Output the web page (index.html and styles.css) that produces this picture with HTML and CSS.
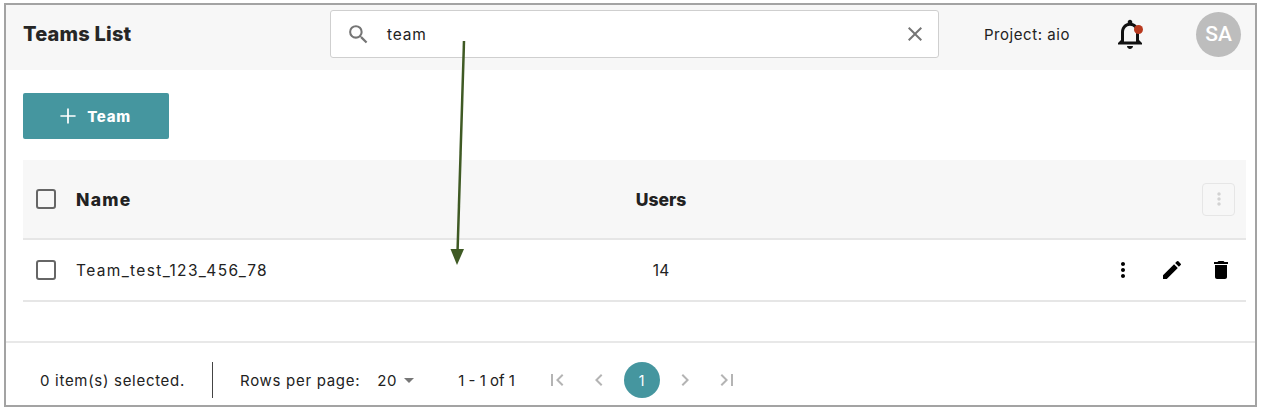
FILE: index.html
```html
<!DOCTYPE html>
<html lang="en">
<head>
    <meta charset="UTF-8">
    <meta name="viewport" content="width=device-width, initial-scale=1.0">
    <title>Teams List</title>
    <link rel="stylesheet" href="styles.css">
</head>
<body>
    <div class="frame">
        <header class="topbar">
            <h1 class="page-title">Teams List</h1>
            <div class="search">
                <svg class="search-icon" width="25" height="25" viewBox="0 0 24 24"><path fill="#757575" d="M15.5 14h-.79l-.28-.27A6.47 6.47 0 0 0 16 9.5 6.5 6.5 0 1 0 9.5 16c1.61 0 3.09-.59 4.23-1.57l.27.28v.79l5 4.99L20.49 19l-4.99-5zm-6 0C7.01 14 5 11.99 5 9.5S7.01 5 9.5 5 14 7.01 14 9.5 11.99 14 9.5 14z"/></svg>
                <span class="search-text">team</span>
                <svg class="clear-icon" width="24" height="24" viewBox="0 0 24 24"><path fill="#757575" d="M19 6.41 17.59 5 12 10.59 6.41 5 5 6.41 10.59 12 5 17.59 6.41 19 12 13.41 17.59 19 19 17.59 13.41 12z"/></svg>
            </div>
            <span class="project">Project: aio</span>
            <span class="bell">
                <svg width="36" height="36" viewBox="0 0 24 24"><path fill="#111" d="M12 22c1.1 0 2-.9 2-2h-4c0 1.100.9 2 2 2zm6-6v-5c0-3.070-1.630-5.640-4.500-6.320V4c0-.83-.67-1.500-1.500-1.500s-1.500.67-1.500 1.500v.68C7.640 5.360 6 7.920 6 11v5l-2 2v1h16v-1l-2-2zm-2 1H8v-6c0-2.480 1.510-4.500 4-4.500s4 2.020 4 4.500v6z"/></svg>
                <span class="bell-dot"></span>
            </span>
            <span class="avatar">SA</span>
        </header>

        <main class="content">
            <button class="btn-add">
                <svg width="26" height="26" viewBox="0 0 24 24"><path fill="#fff" d="M19 12.800h-6.200V19h-1.600v-6.200H5v-1.600h6.200V5h1.600v6.200H19z"/></svg>
                Team
            </button>

            <div class="table-row table-head">
                <span class="check"></span>
                <span class="cell-name">Name</span>
                <span class="cell-users">Users</span>
                <span class="cell-actions">
                    <span class="column-btn">
                        <svg width="20" height="20" viewBox="0 0 24 24"><path fill="#d2d2d2" d="M12 8c1.100 0 2-.9 2-2s-.9-2-2-2-2 .9-2 2 .9 2 2 2zm0 2c-1.100 0-2 .9-2 2s.9 2 2 2 2-.9 2-2-.9-2-2-2zm0 6c-1.100 0-2 .9-2 2s.9 2 2 2 2-.9 2-2-.9-2-2-2z"/></svg>
                    </span>
                </span>
            </div>

            <div class="table-row table-body">
                <span class="check"></span>
                <span class="cell-name">Team_test_123_456_78</span>
                <span class="cell-users">14</span>
                <span class="cell-actions row-actions">
                    <svg width="24" height="24" viewBox="0 0 24 24"><path fill="#000" d="M12 8c1.100 0 2-.9 2-2s-.9-2-2-2-2 .9-2 2 .9 2 2 2zm0 2c-1.100 0-2 .9-2 2s.9 2 2 2 2-.9 2-2-.9-2-2-2zm0 6c-1.100 0-2 .9-2 2s.9 2 2 2 2-.9 2-2-.9-2-2-2z"/></svg>
                    <svg width="24" height="24" viewBox="0 0 24 24"><path fill="#000" d="M3 17.250V21h3.750L17.810 9.940l-3.750-3.750L3 17.250zM20.710 7.040a1 1 0 0 0 0-1.410l-2.340-2.340a1 1 0 0 0-1.410 0l-1.830 1.830 3.750 3.750 1.830-1.830z"/></svg>
                    <svg width="24" height="24" viewBox="0 0 24 24"><path fill="#000" d="M6 19c0 1.100.9 2 2 2h8c1.100 0 2-.9 2-2V7H6v12zM19 4h-3.500l-1-1h-5l-1 1H5v2h14V4z"/></svg>
                </span>
            </div>
        </main>

        <footer class="pager">
            <span class="selected">0 item(s) selected.</span>
            <span class="divider"></span>
            <span class="rows-label">Rows per page:</span>
            <span class="rows-value">20</span>
            <span class="caret"></span>
            <span class="range">1 - 1 of 1</span>
            <span class="page-nav">
                <svg width="24" height="24" viewBox="0 0 24 24"><path fill="#b4b4b4" d="M18.410 16.590 13.820 12l4.590-4.590L17 6l-6 6 6 6zM6 6h2v12H6z"/></svg>
                <svg width="24" height="24" viewBox="0 0 24 24"><path fill="#b4b4b4" d="M15.410 7.410 14 6l-6 6 6 6 1.410-1.410L10.830 12z"/></svg>
                <span class="page-current">1</span>
                <svg width="24" height="24" viewBox="0 0 24 24"><path fill="#b4b4b4" d="M10 6 8.590 7.410 13.170 12l-4.580 4.590L10 18l6-6z"/></svg>
                <svg width="24" height="24" viewBox="0 0 24 24"><path fill="#b4b4b4" d="M5.590 7.410 10.180 12l-4.590 4.590L7 18l6-6-6-6zM16 6h2v12h-2z"/></svg>
            </span>
        </footer>

        <!-- annotation drawn over the screenshot -->
        <svg class="arrow" width="40" height="240" viewBox="0 0 40 240">
            <path fill="none" stroke="#3f5a24" stroke-width="2.500" d="M24 0 17.500 212"/>
            <path fill="#3f5a24" d="M10.500 208H24L17 224z"/>
        </svg>
    </div>
</body>
</html>
```

FILE: styles.css
```css
* {
    box-sizing: border-box;
}
body {
    margin: 0;
    background-color: #fff;
    font-family: Inter, "Open Sans", sans-serif;
    color: #222;
}
.frame {
    position: relative;
    display: flex;
    flex-direction: column;
    width: 1253px;
    height: 404px;
    margin: 3px 0 0 4px;
    border: 2px solid #a3a3a3;
    background: #fff;
}
.topbar {
    display: flex;
    align-items: center;
    height: 65px;
    padding: 0 14px 7px 17px;
    background-color: #f7f7f7;
}
.page-title {
    width: 307px;
    margin: 0;
    font-size: 20px;
    font-weight: 800;
    letter-spacing: .2px;
    color: #262626;
}
.search {
    display: flex;
    align-items: center;
    width: 609px;
    height: 48px;
    padding: 0 11px 0 15px;
    background: #fff;
    border: 1px solid #cfcfcf;
    border-radius: 3px;
}
.search-text {
    flex: 1;
    margin-left: 16px;
    font-size: 15.500px;
    letter-spacing: .8px;
}
.project {
    margin-left: 45px;
    font-size: 15px;
    letter-spacing: .55px;
}
.bell {
    position: relative;
    display: flex;
    margin-left: 42px;
}
.bell-dot {
    position: absolute;
    top: 9px;
    right: 5px;
    width: 9px;
    height: 9px;
    border-radius: 50%;
    background-color: #b93a1f;
}
.avatar {
    display: flex;
    align-items: center;
    justify-content: center;
    width: 45px;
    height: 45px;
    margin-left: 48px;
    border-radius: 50%;
    background-color: #bdbdbd;
    color: #fff;
    font-family: Roboto, "Liberation Sans", sans-serif;
    font-size: 21px;
    font-weight: 500;
}
.content {
    flex: 1;
    padding: 23px 9px 0 17px;
}
.btn-add {
    display: flex;
    align-items: center;
    justify-content: center;
    gap: 6px;
    width: 146px;
    height: 46px;
    margin-bottom: 21px;
    padding: 0 6px 0 0;
    background-color: #45969f;
    color: #fff;
    border: none;
    border-radius: 2px;
    font-family: inherit;
    font-size: 15px;
    font-weight: 800;
    letter-spacing: .7px;
}
.table-row {
    display: grid;
    grid-template-columns: 40px 535px 100px 1fr;
    align-items: center;
    padding-left: 13px;
    border-bottom: 2px solid #e6e6e6;
}
.table-head {
    height: 80px;
    background-color: #f7f7f7;
    font-size: 17.500px;
    font-weight: 800;
    color: #222;
}
.table-head .cell-name {
    letter-spacing: 1.300px;
}
.table-body {
    height: 62px;
    font-size: 15.500px;
}
.table-body .cell-name {
    letter-spacing: 1.350px;
}
.check {
    width: 20px;
    height: 20px;
    border: 2px solid #666;
    border-radius: 3px;
    background: #fff;
}
.table-head .check {
    background: transparent;
}
.cell-users {
    text-align: center;
}
.cell-actions {
    display: flex;
    justify-content: flex-end;
    padding-right: 11px;
}
.column-btn {
    display: flex;
    align-items: center;
    justify-content: center;
    width: 33px;
    height: 33px;
    border: 1px solid #e6e6e6;
    border-radius: 4px;
}
.row-actions {
    gap: 25px;
    padding-right: 13px;
}
.pager {
    display: flex;
    align-items: center;
    height: 64px;
    padding: 12px 0 0 34px;
    border-top: 2px solid #e8e8e8;
    font-size: 15px;
    letter-spacing: .7px;
}
.selected {
    width: 172px;
}
.divider {
    width: 1px;
    height: 36px;
    background-color: #444;
}
.rows-label {
    margin-left: 27px;
}
.rows-value {
    margin-left: 17px;
}
.caret {
    width: 0;
    height: 0;
    margin-left: 7px;
    border-left: 5.500px solid transparent;
    border-right: 5.500px solid transparent;
    border-top: 5.500px solid #777;
}
.range {
    margin-left: 44px;
    letter-spacing: 0;
}
.page-nav {
    display: flex;
    align-items: center;
    gap: 18px;
    margin-left: 30px;
}
.page-current {
    display: flex;
    align-items: center;
    justify-content: center;
    width: 36px;
    height: 36px;
    margin: 0 -5px;
    border-radius: 50%;
    background-color: #45969f;
    color: #fff;
    font-size: 14px;
}
.arrow {
    position: absolute;
    top: 36px;
    left: 434px;
}
```
